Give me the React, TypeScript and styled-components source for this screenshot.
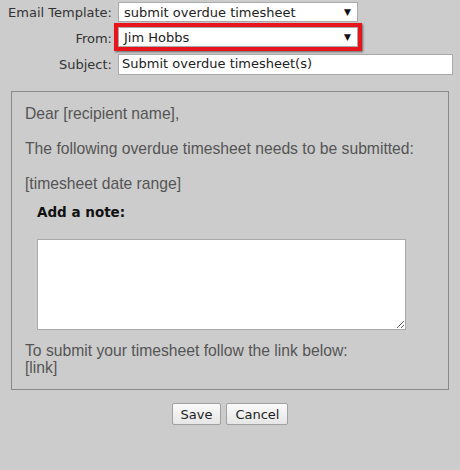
import styled, { createGlobalStyle } from 'styled-components';

const GlobalStyle = createGlobalStyle`
    html, body {
        margin: 0;
        background: #cccccc;
    }
    body {
        font-family: "DejaVu Sans", Verdana, sans-serif;
    }
`;

const Page = styled.div`
    width: 460px;
    height: 470px;
    padding: 2px 0 0 0;
    box-sizing: border-box;
`;

const HeaderGrid = styled.div`
    display: grid;
    grid-template-columns: 118px 1fr;
    align-items: center;
    font-size: 13px;
    color: #333;
`;

const FieldLabel = styled.label`
    text-align: right;
    padding-right: 6px;
`;

const SelectBox = styled.div`
    display: flex;
    align-items: center;
    justify-content: space-between;
    box-sizing: border-box;
    width: 240px;
    height: 20px;
    padding: 0 6px 0 5px;
    background: #fff;
    border: 1px solid #aaa;
    font-size: 13px;
    color: #222;
`;

const Highlight = styled.div`
    border: 4px solid #e8141c;
    box-shadow: 1px 1px 2px rgba(0, 0, 0, 0.5);
    width: max-content;
    margin: 1px 0 3px -4px;
`;

const Arrow = styled.span`
    font-size: 9px;
    color: #111;
`;

const TextInput = styled.div`
    box-sizing: border-box;
    width: 335px;
    height: 21px;
    padding: 1px 3px;
    background: #fff;
    border: 1px solid #aaa;
    font-size: 13px;
    color: #222;
`;

const Panel = styled.div`
    margin: 16px 11px 0 11px;
    box-sizing: border-box;
    height: 299px;
    border: 1px solid #8a8a8a;
    padding: 13px 13px 0 13px;
    font-family: "Liberation Sans", Arial, sans-serif;
    font-size: 15.7px;
    color: #555;
`;

const Para = styled.p`
    margin: 0 0 17px 0;
    line-height: 18px;
`;

const NoteLabel = styled.div`
    font-family: "DejaVu Sans", Verdana, sans-serif;
    font-weight: bold;
    font-size: 13.5px;
    color: #111;
    margin: -6px 0 0 12px;
`;

const NoteArea = styled.textarea`
    display: block;
    box-sizing: border-box;
    width: 369px;
    height: 91px;
    margin: 19px 0 12px 12px;
    border: 1px solid #a9a9a9;
    background: #fff;
    resize: both;
`;

const Footer = styled.p`
    margin: 0;
    line-height: 17px;
`;

const ButtonRow = styled.div`
    display: flex;
    justify-content: center;
    gap: 5px;
    margin: 13px 0 0 0;
`;

const Button = styled.button`
    height: 22px;
    padding: 0 8px;
    font-family: "DejaVu Sans", Verdana, sans-serif;
    font-size: 13px;
    color: #222;
    background: linear-gradient(#fafafa, #e6e6e6);
    border: 1px solid #a0a0a0;
    border-radius: 2px;
`;

export default function App() {
    return (
        <Page>
            <GlobalStyle />
            <HeaderGrid>
                <FieldLabel>Email Template:</FieldLabel>
                <SelectBox>
                    <span>submit overdue timesheet</span>
                    <Arrow>▼</Arrow>
                </SelectBox>
                <FieldLabel>From:</FieldLabel>
                <Highlight>
                    <SelectBox>
                        <span>Jim Hobbs</span>
                        <Arrow>▼</Arrow>
                    </SelectBox>
                </Highlight>
                <FieldLabel>Subject:</FieldLabel>
                <TextInput>Submit overdue timesheet(s)</TextInput>
            </HeaderGrid>
            <Panel>
                <Para>Dear [recipient name],</Para>
                <Para>The following overdue timesheet needs to be submitted:</Para>
                <Para>[timesheet date range]</Para>
                <NoteLabel>Add a note:</NoteLabel>
                <NoteArea />
                <Footer>
                    To submit your timesheet follow the link below:
                    <br />
                    [link]
                </Footer>
            </Panel>
            <ButtonRow>
                <Button>Save</Button>
                <Button>Cancel</Button>
            </ButtonRow>
        </Page>
    );
}
